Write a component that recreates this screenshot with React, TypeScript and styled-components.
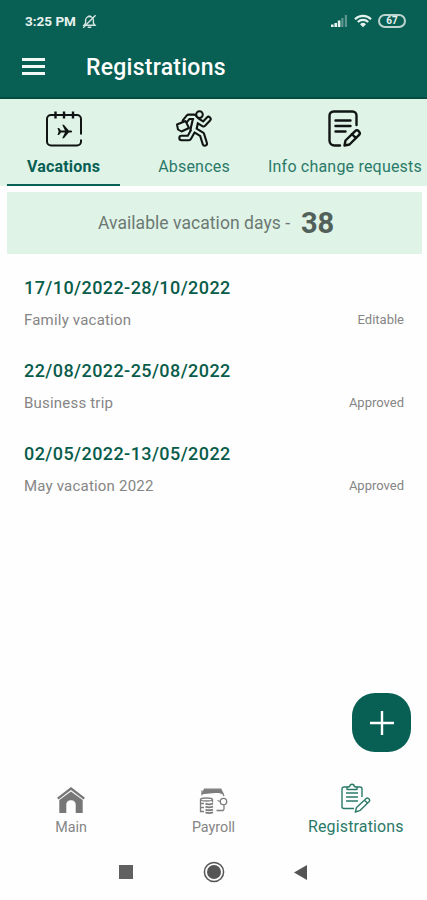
import styled, { createGlobalStyle } from 'styled-components'

const registrations = [
  { period: '17/10/2022-28/10/2022', title: 'Family vacation', status: 'Editable' },
  { period: '22/08/2022-25/08/2022', title: 'Business trip', status: 'Approved' },
  { period: '02/05/2022-13/05/2022', title: 'May vacation 2022', status: 'Approved' },
]

const MutedBell = () => (
  <svg width='15' height='15' viewBox='0 0 15 15' fill='none' stroke='#d5e6e1' strokeWidth='1.4'>
    <path d='M2 11.2h11l-1.600-2V6.400a3.900 3.900 0 0 0-7.800 0v2.800z' />
    <path d='M5.700 13.200h3.600M1.200 13.800 13.600 1.200M6.300 2.200h2.400' />
  </svg>
)

const Signal = () => (
  <svg width='17' height='12' viewBox='0 0 17 12' fill='#e6f2ee'>
    <path d='M0 9.5h2.600V12H0zM3.400 8H6v4H3.400zM6.800 5.500h2.600V12H6.800z' />
    <path d='M10.300 3h2.200v9h-2.200zM13.800 0H16v12h-2.200z' opacity='0.38' />
  </svg>
)

const Wifi = () => (
  <svg width='18' height='14' viewBox='0 0 18 14' fill='none' stroke='#e6f2ee' strokeWidth='2.200'>
    <path d='M1 5.200a11.300 11.300 0 0 1 16 0M3.800 8a7.400 7.400 0 0 1 10.400 0' />
    <path d='M6 10.200a4.300 4.300 0 0 1 6 0l-3 3z' fill='#e6f2ee' stroke='none' />
  </svg>
)

const CalendarPlane = () => (
  <svg width='38' height='38' viewBox='0 0 38 38' fill='none' stroke='#101514' strokeWidth='2'>
    <path d='M36 24.500V9a4 4 0 0 0-4-4H6a4 4 0 0 0-4 4v22.500a4 4 0 0 0 4 4h26a4 4 0 0 0 4-4v-2' />
    <path d='M10.500 1.500v7M19 1.500v7M28 1.500v7' strokeWidth='2.400' />
    <path
      d='M12.500 18h1.500l2 2.400h4l-2.800-5.700h1.700l4.900 5.700h2c1.800 0 1.800 2.200 0 2.200h-2l-4.900 5.700h-1.700l2.800-5.700h-4l-2 2.400h-1.500l1.200-3.500z'
      fill='#101514'
      stroke='none'
    />
  </svg>
)

// limbs are drawn twice, the thin pass leaves only the outline of the thick one
const runnerBody = (
  <>
    <path d='m10 11 3.500-4.200h5.500l3.500 3.700 6 3.800 5-5.300' />
    <path d='m20.500 11-2.500 8 9 5.500 2.800 9' />
    <path d='m18.500 20-4.500 8H6.500' />
  </>
)

const RunningPerson = () => (
  <svg
    width='38'
    height='38'
    viewBox='0 0 38 38'
    fill='none'
    strokeLinejoin='round'
    strokeLinecap='round'
  >
    <g stroke='#101514' strokeWidth='6.400'>{runnerBody}</g>
    <path d='m20.500 10.500-2 9' stroke='#101514' strokeWidth='8' />
    <g stroke='#dff3e7' strokeWidth='2.300'>{runnerBody}</g>
    <path d='m20.500 10.500-2 9' stroke='#dff3e7' strokeWidth='3.600' />
    <g stroke='#101514' strokeWidth='2' fill='#dff3e7'>
      <circle cx='24.500' cy='4.600' r='3.300' />
      <path d='m2 14.500 8.500-3.500 3.500 7-7.500 3.500-3.500-2z' />
    </g>
  </svg>
)

const DocumentPencil = () => (
  <svg
    width='34'
    height='38'
    viewBox='0 0 34 38'
    fill='none'
    stroke='#101514'
    strokeWidth='2.400'
    strokeLinecap='round'
    strokeLinejoin='round'
  >
    <path d='M28.500 15V5.500a4 4 0 0 0-4-4h-19a4 4 0 0 0-4 4v25a5 5 0 0 0 5 5H12' />
    <path d='M7.500 10.500h15M7.500 16h15M7.500 21.500h10' />
    <path d='m17.500 30.500 9.400-9.200c2.700-2.500 6.500 1.200 4 3.900l-9.400 9.300-5 1zM23.800 24l4.200 4.200' />
  </svg>
)

const House = () => (
  <svg width='28' height='27' viewBox='0 0 28 27' fill='#777'>
    <path d='M14 0 28 10.700l-1.500 1.700L14 3 1.500 12.400 0 10.700z' />
    <path d='M14 4.600 25.700 13v13h-7v-8.500c0-5.800-9.400-5.800-9.400 0V26h-7V13z' />
  </svg>
)

const Wallet = () => (
  <svg width='30' height='27' viewBox='0 0 30 27' fill='none' stroke='#7d7d7d' strokeWidth='1.300'>
    <path d='M4.500 6.500 6.500 2.200h16.300l2 4.300-5-1.300z' fill='#7d7d7d' />
    <path d='M4 3.500v4.800M24 5l2 4' />
    <ellipse cx='8.500' cy='12.500' rx='6' ry='1.500' />
    <path d='M2.500 12.500v12h3.500M2.500 16.500h3.500M2.500 20.500h3.500M14.500 12.500v3' />
    <path d='M7.500 16.700c2 .8 5 .8 7.500 0M7.500 19.700c2 .8 5 .8 7.500 0M7.500 22.600c2 .8 5 .8 7.500 0M7.500 25.400c2 .8 5 .8 7.500 0' strokeWidth='1.800' />
    <circle cx='25.500' cy='14.500' r='3.200' />
    <path d='m19.500 13.500 2.800 1M18.500 23.500H25l1-1.500v-4' />
  </svg>
)

const ClipboardPencil = () => (
  <svg
    width='30'
    height='30'
    viewBox='0 0 30 30'
    fill='none'
    stroke='#2b7a69'
    strokeWidth='1.400'
    strokeLinejoin='round'
  >
    <path d='M6.500 4H3a2 2 0 0 0-2 2v17.500a2 2 0 0 0 2 2h10M15.500 4H19a2 2 0 0 1 2 2v8' />
    <path d='M6 6.500V4.200l2.700-.7c0-3 4.600-3 4.600 0l2.700.7v2.300z' />
    <path d='M5 10h12M5 14h12M5 18h12' />
    <path d='m15.500 24.500 9.700-9c1.500-1.400 4.500 1.300 3 3l-9.500 9.200-4.400 1.300zM23.500 17l3 3.200' />
  </svg>
)

export default function App() {
  return (
    <Screen>
      <GlobalStyle />
      <Header>
        <StatusBar>
          <time>3:25 PM</time>
          <MutedBell />
          <StatusIcons>
            <Signal />
            <Wifi />
            <Battery>67</Battery>
          </StatusIcons>
        </StatusBar>
        <Toolbar>
          <MenuButton aria-label='Menu'>
            <i />
            <i />
            <i />
          </MenuButton>
          <h1>Registrations</h1>
        </Toolbar>
      </Header>

      <Tabs>
        <Tab $width={113} $active>
          <CalendarPlane />
          <span>Vacations</span>
        </Tab>
        <Tab $width={148}>
          <RunningPerson />
          <span>Absences</span>
        </Tab>
        <Tab $width={154}>
          <DocumentPencil />
          <span>Info change requests</span>
        </Tab>
      </Tabs>

      <Balance>
        <span>Available vacation days -</span>
        <strong>38</strong>
      </Balance>

      <List>
        {registrations.map(r => (
          <Item key={r.period}>
            <h2>{r.period}</h2>
            <div>
              <p>{r.title}</p>
              <small>{r.status}</small>
            </div>
          </Item>
        ))}
      </List>

      <AddButton aria-label='Add'>
        <svg width='26' height='26' viewBox='0 0 26 26' stroke='#fff' strokeWidth='2.400'>
          <path d='M13 1v24M1 13h24' />
        </svg>
      </AddButton>

      <BottomNav>
        <NavItem $size={14.3}>
          <House />
          <span>Main</span>
        </NavItem>
        <NavItem $size={14.3}>
          <Wallet />
          <span>Payroll</span>
        </NavItem>
        <NavItem $size={16} $active>
          <ClipboardPencil />
          <span>Registrations</span>
        </NavItem>
      </BottomNav>

      <SystemNav>
        <svg width='14' height='14' viewBox='0 0 14 14'>
          <path d='M0 0h14v14H0z' fill='#606060' />
        </svg>
        <svg width='22' height='22' viewBox='0 0 22 22'>
          <circle cx='11' cy='11' r='9.600' fill='none' stroke='#555' strokeWidth='1.500' />
          <circle cx='11' cy='11' r='7' fill='#555' />
        </svg>
        <svg width='14' height='15' viewBox='0 0 14 15'>
          <path d='M0 7.500 13 0v15z' fill='#555' />
        </svg>
      </SystemNav>
    </Screen>
  )
}

const GlobalStyle = createGlobalStyle`
  * {
    box-sizing: border-box;
    margin: 0;
    padding: 0;
  }
  body {
    background-color: #fefefe;
    font-family: Roboto, 'Liberation Sans', sans-serif;
  }
  button {
    border: none;
    background: none;
    font: inherit;
  }
  svg {
    display: block;
    flex-shrink: 0;
  }
`

const Screen = styled.div`
  position: relative;
  display: flex;
  flex-direction: column;
  width: 427px;
  height: 900px;
  overflow: hidden;
`

const Header = styled.header`
  height: 99px;
  color: white;
  background-color: #085f54;
  border-bottom: 2px solid #044d43;
`

const StatusBar = styled.div`
  display: flex;
  align-items: center;
  height: 42px;
  padding: 0 21px 0 25px;
  time {
    width: 51px;
    margin-right: 6px;
    font-size: 13.5px;
    font-weight: 700;
    white-space: nowrap;
    color: #e6f2ee;
  }
`

const StatusIcons = styled.div`
  display: flex;
  align-items: center;
  gap: 6px;
  margin-left: auto;
`

const Battery = styled.span`
  display: flex;
  align-items: center;
  justify-content: center;
  width: 28px;
  height: 14px;
  border: 2px solid #bcd6cf;
  border-radius: 7px;
  font-size: 10px;
  font-weight: 700;
  line-height: 12px;
  color: #e6f2ee;
`

const Toolbar = styled.div`
  display: flex;
  align-items: center;
  height: 51px;
  padding-left: 22px;
  h1 {
    margin-left: 41px;
    font-size: 23px;
    font-weight: 500;
    letter-spacing: 0.25px;
  }
`

const MenuButton = styled.button`
  display: flex;
  flex-direction: column;
  gap: 4px;
  width: 23px;
  margin-top: -3px;
  i {
    height: 3px;
    background-color: #f2f8f6;
  }
`

const Tabs = styled.nav`
  display: flex;
  height: 87px;
  padding-left: 7px;
  background-color: #dff3e7;
`

const Tab = styled.button<{ $width: number; $active?: boolean }>`
  display: flex;
  flex-direction: column;
  align-items: center;
  gap: 9px;
  flex: 0 0 ${props => props.$width}px;
  padding-top: 11px;
  border-bottom: 2px solid ${props => (props.$active ? '#085f54' : 'transparent')};
  color: ${props => (props.$active ? '#085f54' : '#2b7a69')};
  font-size: 16px;
  font-weight: ${props => (props.$active ? 700 : 400)};
  line-height: 19px;
  letter-spacing: 0.2px;
  white-space: nowrap;
`

const Balance = styled.section`
  display: flex;
  align-items: center;
  justify-content: center;
  gap: 11px;
  height: 62px;
  margin: 6px 5px 0 7px;
  padding-left: 3px;
  background-color: #dff3e7;
  color: #6c7973;
  font-size: 17.5px;
  letter-spacing: 0.05px;
  strong {
    color: #52605a;
    font-size: 29px;
    font-weight: 700;
    letter-spacing: -0.2px;
  }
`

const List = styled.main`
  flex: 1;
  padding: 22px 23px 0 24px;
`

const Item = styled.article`
  height: 83px;
  h2 {
    color: #085c4a;
    font-size: 18px;
    font-weight: 500;
    line-height: 24px;
    letter-spacing: 0.42px;
  }
  div {
    display: flex;
    justify-content: space-between;
    margin-top: 10px;
    color: #858585;
    line-height: 20px;
  }
  p {
    font-size: 15px;
    letter-spacing: 0.2px;
  }
  small {
    font-size: 13px;
    line-height: 20px;
  }
`

const AddButton = styled.button`
  position: absolute;
  right: 16px;
  bottom: 148px;
  display: grid;
  place-items: center;
  width: 59px;
  height: 59px;
  border-radius: 23px;
  background-color: #085f54;
`

const BottomNav = styled.nav`
  display: flex;
  height: 62px;
`

const NavItem = styled.button<{ $size: number; $active?: boolean }>`
  display: flex;
  flex: 1;
  flex-direction: column;
  align-items: center;
  justify-content: flex-end;
  gap: ${props => (props.$active ? 4 : 3)}px;
  padding-bottom: 7px;
  color: ${props => (props.$active ? '#2b7a69' : '#858585')};
  font-size: ${props => props.$size}px;
  line-height: 20px;
  letter-spacing: ${props => (props.$active ? 0.15 : 0)}px;
`

const SystemNav = styled.footer`
  display: grid;
  grid-template-columns: repeat(3, 87.5px);
  place-content: center;
  place-items: center;
  height: 56px;
`
